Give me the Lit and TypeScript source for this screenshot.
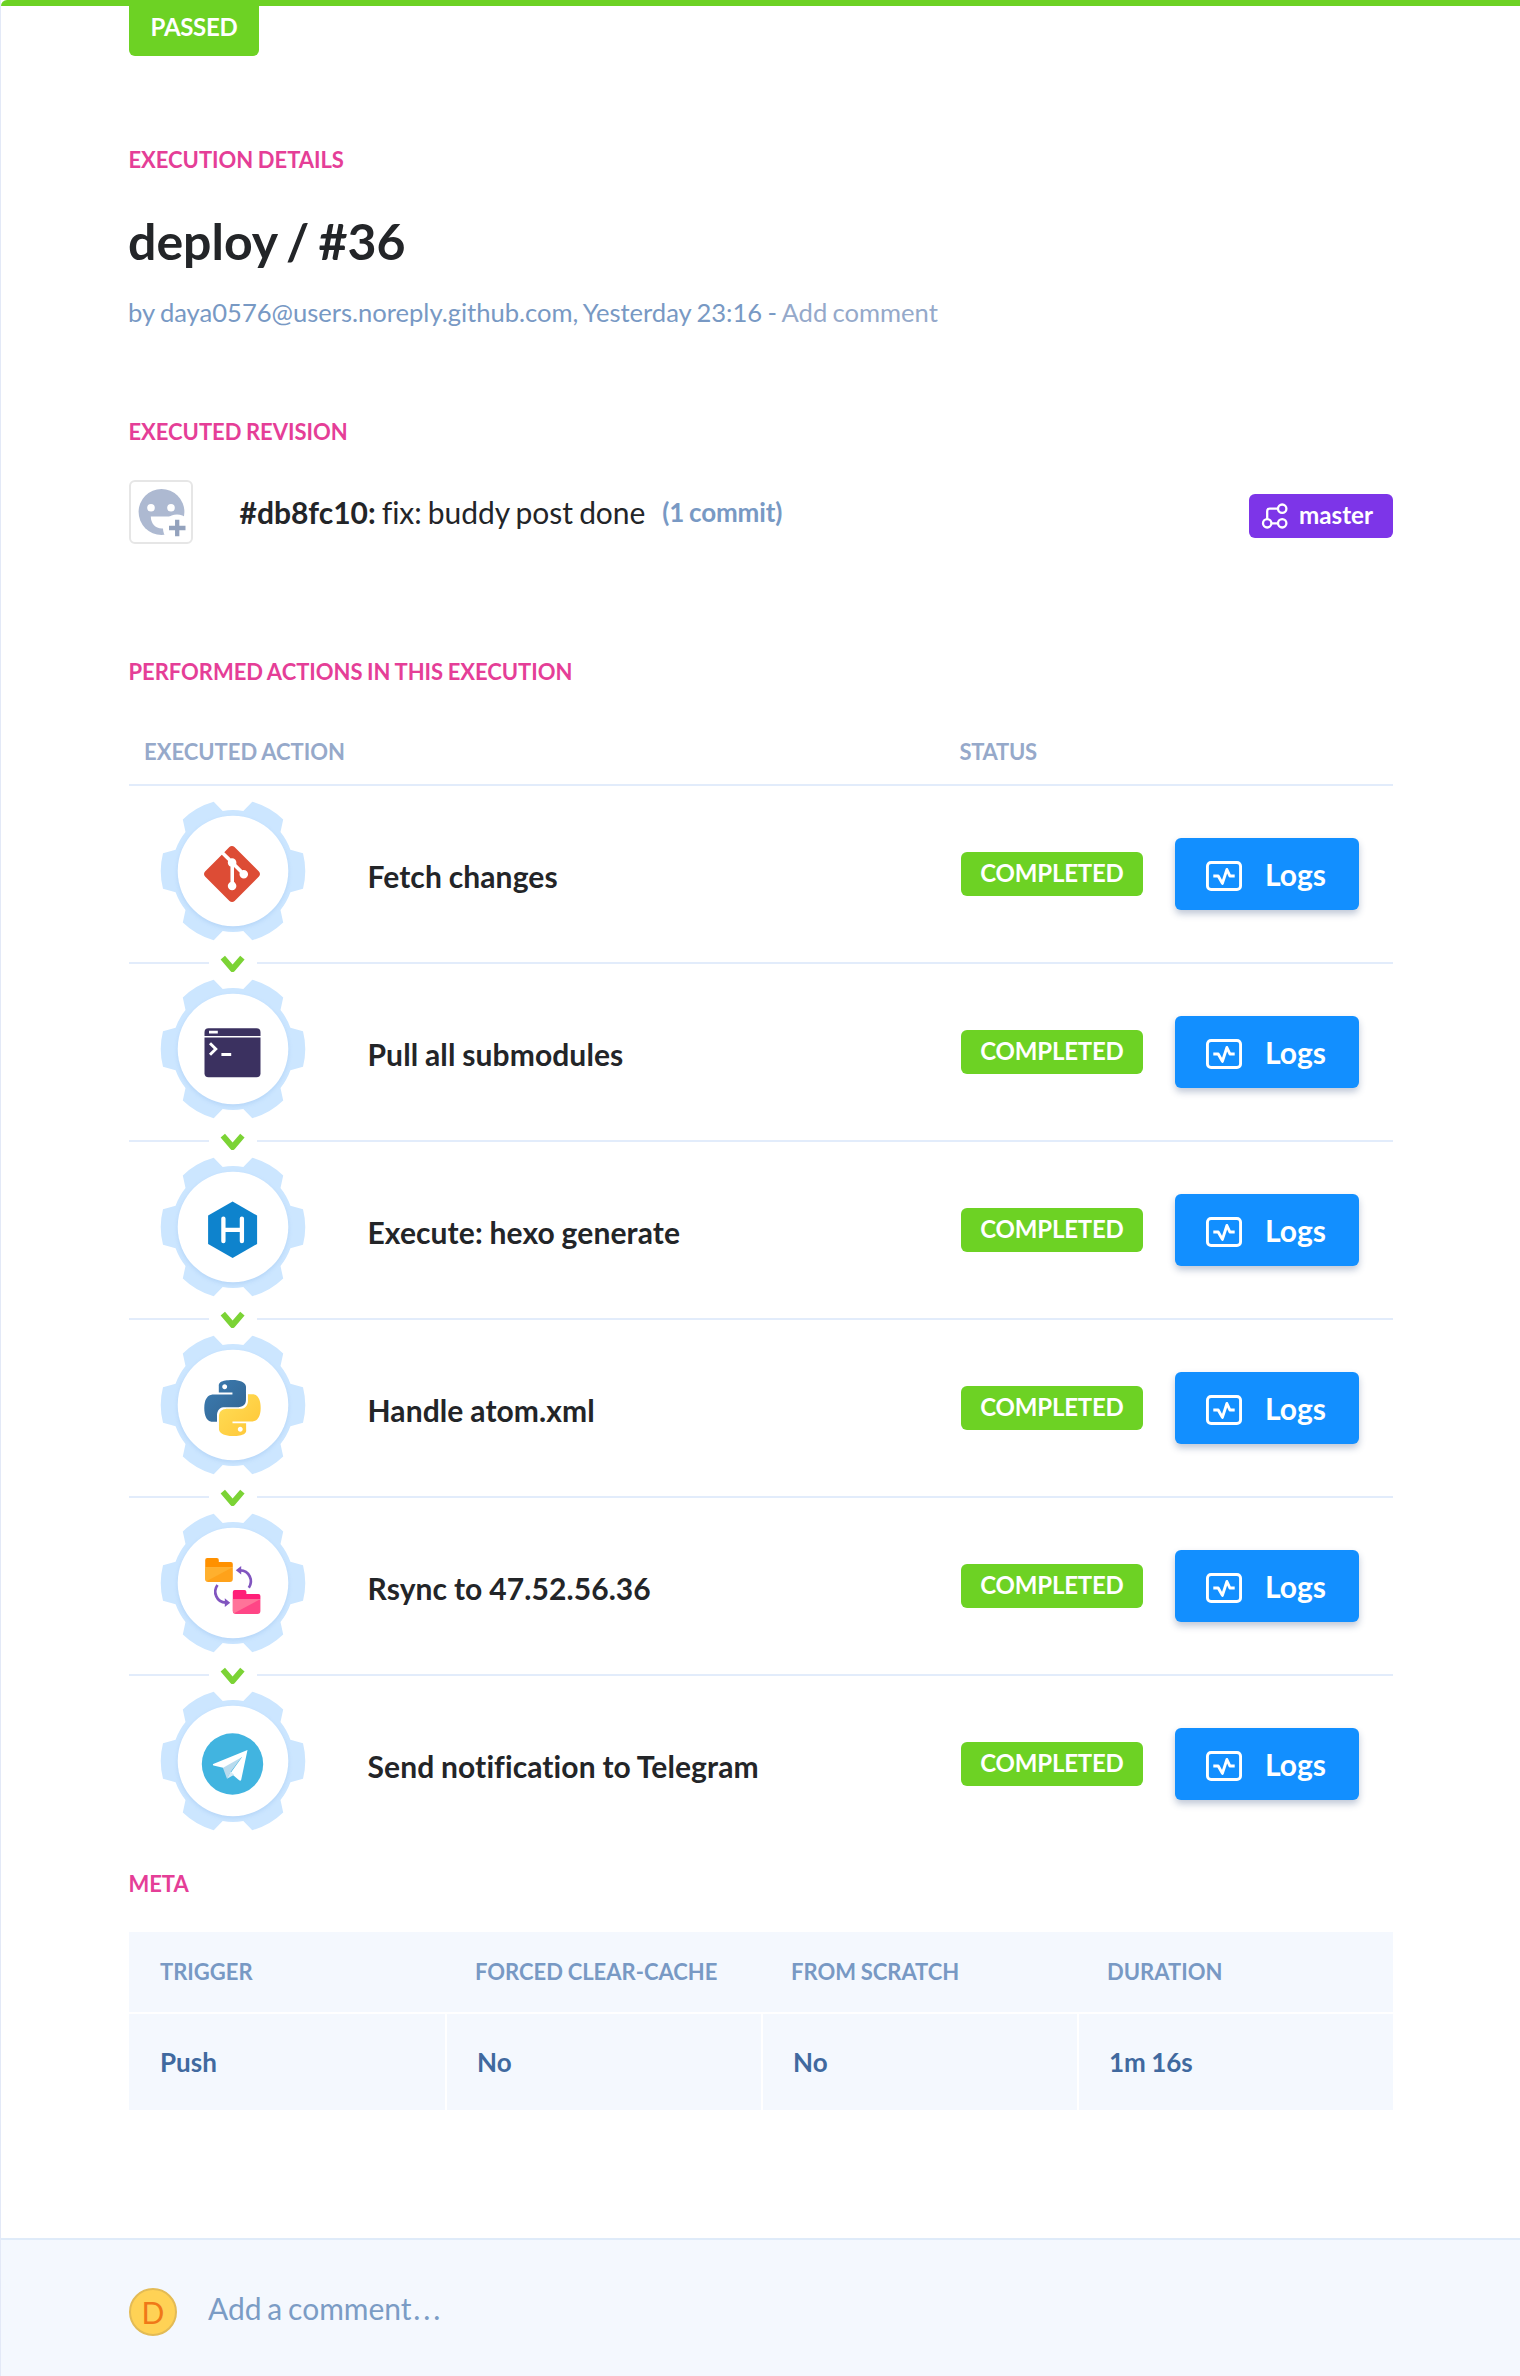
import { LitElement, html, css, svg, TemplateResult } from "lit";
import { customElement, property } from "lit/decorators.js";

type IconName = "git" | "terminal" | "hexo" | "python" | "rsync" | "telegram";

/* Every action icon is drawn in a 64x64 box centred on 32,32. */
const ICONS: Record<IconName, TemplateResult> = {
  git: svg`<path transform="translate(3.8 4) scale(2.333)" fill="#dd4c35" d="M23.546 10.93L13.067.452c-.604-.603-1.582-.603-2.188 0L8.708 2.627l2.76 2.76c.645-.215 1.379-.07 1.889.441.516.515.658 1.258.438 1.9l2.658 2.66c.645-.223 1.387-.078 1.9.435.721.72.721 1.884 0 2.604-.719.719-1.881.719-2.6 0-.539-.541-.674-1.337-.404-1.996L12.86 8.955v6.525c.176.086.342.203.488.348.713.721.713 1.883 0 2.6-.719.721-1.889.721-2.609 0-.719-.719-.719-1.879 0-2.598.182-.18.387-.316.605-.406V8.835c-.217-.091-.424-.222-.6-.401-.545-.545-.676-1.342-.396-2.009L7.636 3.7.45 10.881c-.6.605-.6 1.584 0 2.189l10.48 10.477c.604.604 1.582.604 2.186 0l10.43-10.43c.605-.603.605-1.582 0-2.187"/>`,
  terminal: svg`<g transform="translate(4 7.8)">
    <path fill="#3b3160" d="M.3 8.2V4.5a4 4 0 0 1 4-4h48a4 4 0 0 1 4 4v3.7z"/>
    <path fill="#3b3160" d="M.3 9.7h56v35.8a4 4 0 0 1-4 4h-48a4 4 0 0 1-4-4z"/>
    <path fill="#fff" d="M4.8 2.9h8.8v2.8H4.8zM17.2 25.2h9.8v2.9h-9.8z"/>
    <path fill="none" stroke="#fff" stroke-width="2.9" d="M5.8 15.4l5.8 5.8-5.8 5.8"/>
  </g>`,
  hexo: svg`<path fill="#0e83cd" d="M32.4 3.4l24.5 14.2v28.3L32.4 60.1 7.9 45.9V17.6z"/>
    <path fill="none" stroke="#fff" stroke-width="4.3" stroke-linecap="round" d="M23.2 20.6v22.6M41.7 20.6v22.6M23.2 31.9h18.5"/>`,
  python: svg`<defs>
      <linearGradient id="blue" x1="0" y1="0" x2="1" y2="1"><stop offset="0" stop-color="#3c7db3"/><stop offset="1" stop-color="#32638f"/></linearGradient>
      <linearGradient id="gold" x1="0" y1="0" x2="1" y2="1"><stop offset="0" stop-color="#ffdf58"/><stop offset="1" stop-color="#ffc536"/></linearGradient>
    </defs>
    <g transform="translate(4.2 4) scale(2.333)">
      <path fill="url(#blue)" d="M14.25.18l.9.2.73.26.59.3.45.32.34.34.25.34.16.33.1.3.04.26.02.2-.01.13V8.5l-.05.63-.13.55-.21.46-.26.38-.3.31-.33.25-.35.19-.35.14-.33.1-.3.07-.26.04-.21.02H8.77l-.69.05-.59.14-.5.22-.41.27-.33.32-.27.35-.2.36-.15.37-.1.35-.07.32-.04.27-.02.21v3.06H3.17l-.21-.03-.28-.07-.32-.12-.35-.18-.36-.26-.36-.36-.35-.46-.32-.59-.28-.73-.21-.88-.14-1.05-.05-1.23.06-1.22.16-1.04.24-.87.32-.71.36-.57.4-.44.42-.33.42-.24.4-.16.36-.1.32-.05.24-.01h.16l.06.01h8.16v-.83H6.18l-.01-2.75-.02-.37.05-.34.11-.31.17-.28.25-.26.31-.23.38-.2.44-.18.51-.15.58-.12.64-.1.71-.06.77-.04.84-.02 1.27.05zm-6.3 1.98l-.23.33-.08.41.08.41.23.34.33.22.41.09.41-.09.33-.22.23-.34.08-.41-.08-.41-.23-.33-.33-.22-.41-.09-.41.09z"/>
      <path fill="url(#gold)" d="M21.1 6.11l.28.06.32.12.35.18.36.27.36.35.35.47.32.59.28.73.21.88.14 1.04.05 1.23-.06 1.23-.16 1.04-.24.86-.32.71-.36.57-.4.45-.42.33-.42.24-.4.16-.36.09-.32.05-.24.02-.16-.01h-8.22v.82h5.84l.01 2.76.02.36-.05.34-.11.31-.17.29-.25.25-.31.24-.38.2-.44.17-.51.15-.58.13-.64.09-.71.07-.77.04-.84.01-1.27-.04-1.07-.14-.9-.2-.73-.25-.59-.3-.45-.33-.34-.34-.25-.34-.16-.33-.1-.3-.04-.25-.02-.2.01-.13v-5.34l.05-.64.13-.54.21-.46.26-.38.3-.32.33-.24.35-.2.35-.14.33-.1.3-.06.26-.04.21-.02.13-.01h5.84l.69-.05.59-.14.5-.21.41-.28.33-.32.27-.35.2-.36.15-.36.1-.35.07-.32.04-.28.02-.21V6.07h2.09l.14.01zm-6.47 14.25l-.23.33-.08.41.08.41.23.33.33.23.41.08.41-.08.33-.23.23-.33.08-.41-.08-.41-.23-.33-.33-.23-.41-.08-.41.08z"/>
    </g>`,
  rsync: svg`<g transform="translate(4 4)">
    <path fill="#ff9100" d="M1 9.2V2a2 2 0 0 1 2-2h9.6a2 2 0 0 1 2 2v2h12a2 2 0 0 1 2 2v3.2z"/>
    <path fill="#ffa21a" d="M1 9.2h27.6V21a3 3 0 0 1-3 3H4a3 3 0 0 1-3-3z"/>
    <path fill="#ffb02e" d="M1 9.2h27.4L2.2 23.2A3 3 0 0 1 1 21z"/>
    <path fill="#ff1f78" d="M28.6 41.2V34a2 2 0 0 1 2-2h9.6a2 2 0 0 1 2 2v2h12a2 2 0 0 1 2 2v3.2z"/>
    <path fill="#ff4686" d="M28.6 41.2h27.6V53a3 3 0 0 1-3 3H31.6a3 3 0 0 1-3-3z"/>
    <path fill="#ff7399" d="M28.6 41.2H56L29.8 55.2a3 3 0 0 1-1.2-2.2z"/>
    <g fill="none" stroke="#8155bf" stroke-width="2.7">
      <path d="M44.6 29.8C49.5 22.5 45 12.4 36 12.3"/>
      <path d="M13.3 27C8.2 34 12.5 44.5 21.6 44.6"/>
    </g>
    <path fill="#8155bf" d="M31.6 12.3l5.4-4.4v8.7zM26 44.7l-5.4-4.4V49z"/>
  </g>`,
  telegram: svg`<circle cx="32.3" cy="32" r="30.7" fill="#41b4e0"/>
    <path fill="#b9dbee" d="M22.5 35.2l4.3 11.6L30 40.5l12.6-17z"/>
    <path fill="#fff" d="M13 32l34.3-14L41 47.8a1.3 1.3 0 0 1-2 .5l-8.6-7.2 11.5-16-19 10.6-9.6-2.3a.8.8 0 0 1-.3-1.4z"/>
    <path fill="#d6eaf5" d="M26.8 46.8l3.5-7 3.7 3z"/>`,
};

@customElement("gear-icon")
export class GearIcon extends LitElement {
  @property() name: IconName = "git";

  static styles = css`
    :host { display: block; width: 144px; height: 144px; }
    svg { display: block; overflow: visible; }
    .body { fill: #cce6ff; }
    .disc { fill: #fff; filter: drop-shadow(0 2px 2px rgba(90, 150, 220, 0.2)); }
  `;

  render() {
    return html`<svg width="144" height="144" viewBox="-72 -72 144 144">
      <path class="body" d="M-10.3-60A61 61 0 0 1 10.3-60L19.3-69.2A72 72 0 0 1 50.2-51.5L47.5-39A61 61 0 0 1 57.4-21.3L70-17.8A72 72 0 0 1 70 17.8L57.4 21.3A61 61 0 0 1 47.5 39L50.2 51.5A72 72 0 0 1 19.3 69.2L10.3 60A61 61 0 0 1-10.3 60L-19.3 69.2A72 72 0 0 1-50.2 51.5L-47.5 39A61 61 0 0 1-57.4 21.3L-70 17.8A72 72 0 0 1-70-17.8L-57.4-21.3A61 61 0 0 1-47.5-39L-50.2-51.5A72 72 0 0 1-19.3-69.2z"/>
      <circle class="disc" r="55.3"/>
      <g transform="translate(-32.8 -29)">${ICONS[this.name]}</g>
    </svg>`;
  }
}

@customElement("action-row")
export class ActionRow extends LitElement {
  @property() icon: IconName = "git";
  @property() label = "";
  @property({ type: Boolean }) last = false;

  static styles = css`
    :host { display: block; }
    .row {
      position: relative; display: flex; align-items: center; height: 176px;
      border-bottom: 2px solid #e2ecfb;
    }
    .row.last { border-bottom: 0; }
    gear-icon { margin: 0 0 6px 32px; }
    .label {
      flex: 1; margin-left: 62.5px; padding-top: 4px; color: #232528;
      font-size: 30px; line-height: 36px; font-weight: 700;
      letter-spacing: 0.1px; word-spacing: -0.02em; font-variant-ligatures: none;
    }
    .status {
      box-sizing: border-box; width: 182px; height: 44px; padding-top: 6px;
      border-radius: 6px; background: #6dd224; color: #fff; text-align: center;
      font-size: 24px; line-height: 29px; font-weight: 700; letter-spacing: -0.2px;
    }
    .logs {
      display: flex; align-items: center; gap: 23px; box-sizing: border-box;
      width: 184px; height: 72px; margin: 0 34px 0 32px; padding: 0 0 0 31px;
      border: 0; border-radius: 6px; background: #128fff; color: #fff;
      box-shadow: 0 4px 7px rgba(60, 84, 130, 0.32);
      font: 700 30px/36px Lato, sans-serif;
    }
    .logs svg { flex: none; margin-top: 4px; }
    .next {
      position: absolute; left: 80px; bottom: -11px; width: 48px; height: 18px;
      background: #fff; display: flex; justify-content: center;
    }
  `;

  render() {
    return html`<div class="row ${this.last ? "last" : ""}">
      <gear-icon .name=${this.icon}></gear-icon>
      <div class="label">${this.label}</div>
      <div class="status">COMPLETED</div>
      <button class="logs">
        <svg width="36" height="30" viewBox="0 0 36 30" fill="none" stroke="#fff" stroke-width="2.9">
          <rect x="1.45" y="1.45" width="33.1" height="27.1" rx="3.6"/>
          <path d="M7.3 15h4.9l4.2 7.4L20.9 8.5l3 6.5h4.8" stroke-linejoin="round"/>
        </svg>
        Logs
      </button>
      ${this.last ? "" : html`<div class="next">
        <svg width="26" height="18" viewBox="0 0 26 18"><path fill="none" stroke="#7bd335" stroke-width="5.8" stroke-linejoin="round" d="M2.8 2.7L12.6 14 22.4 2.7"/></svg>
      </div>`}
    </div>`;
  }
}

@customElement("app-root")
export class AppRoot extends LitElement {
  private actions: { icon: IconName; label: string }[] = [
    { icon: "git", label: "Fetch changes" },
    { icon: "terminal", label: "Pull all submodules" },
    { icon: "hexo", label: "Execute: hexo generate" },
    { icon: "python", label: "Handle atom.xml" },
    { icon: "rsync", label: "Rsync to 47.52.56.36" },
    { icon: "telegram", label: "Send notification to Telegram" },
  ];

  private meta = [
    { name: "TRIGGER", value: "Push" },
    { name: "FORCED CLEAR-CACHE", value: "No" },
    { name: "FROM SCRATCH", value: "No" },
    { name: "DURATION", value: "1m 16s" },
  ];

  static styles = css`
    :host { display: block; font-family: Lato, sans-serif; color: #232528; font-variant-ligatures: none; }
    .page {
      box-sizing: border-box; display: flex; flex-direction: column;
      height: 2376px; background: #fff; border-left: 1px solid #e3e9f7;
    }
    .bar { height: 6px; background: #6dd224; border-top-left-radius: 6px; flex: none; }
    .content { padding: 0 127px 0 128px; }
    .passed {
      box-sizing: border-box; width: 130px; height: 50px; padding-top: 6px;
      background: #6dd224; border-radius: 0 0 6px 6px; color: #fff; text-align: center;
      font-size: 24px; line-height: 29px; font-weight: 700; letter-spacing: -0.3px;
    }
    h2 {
      margin: 0 0 0 -0.5px; color: #e53e97; font-size: 22px; line-height: 27px;
      font-weight: 700; letter-spacing: -0.04px; word-spacing: -0.03em;
    }
    .details { margin-top: 90px; }
    h1 { margin: 38px 0 0 -1px; font-size: 50px; line-height: 60px; font-weight: 700; word-spacing: -0.06em; }
    .by {
      margin: 26px 0 0 -1px; color: #7899c4; font-size: 25.6px; line-height: 30px;
      white-space: nowrap; letter-spacing: -0.02px; word-spacing: -0.045em;
    }
    .by span { color: #95a9ca; }
    .revision-title { margin-top: 91px; }
    .revision { display: flex; align-items: center; height: 64px; margin-top: 35px; }
    .face {
      box-sizing: border-box; width: 64px; height: 64px; border: 2px solid #e6e6e6;
      border-radius: 6px; margin-right: 46.5px;
    }
    .face svg { display: block; }
    .hash { font-size: 30px; line-height: 36px; font-weight: 700; }
    .message { margin-left: 6px; font-size: 30px; line-height: 36px; letter-spacing: -0.07px; word-spacing: -0.045em; }
    .commits {
      flex: 1; margin-left: 17px; color: #7899c4; font-size: 26px; line-height: 32px;
      font-weight: 700; letter-spacing: -0.15px; word-spacing: -0.05em;
    }
    .branch {
      display: flex; align-items: flex-start; gap: 10px; box-sizing: border-box;
      width: 144px; height: 44px; margin-top: 8px; padding: 6px 0 0 12px;
      background: #7d35e8; border-radius: 6px; color: #fff;
      font-size: 24.2px; line-height: 29px; font-weight: 700;
    }
    .branch svg { margin-top: 2px; }
    .performed { margin-top: 114px; }
    .head {
      display: flex; margin-top: 53px; padding: 0 0 19px 15px; border-bottom: 2px solid #e2ecfb;
      color: #96a9ca; font-size: 22px; line-height: 27px; font-weight: 700; word-spacing: -0.03em;
    }
    .head div:first-child { width: 815.5px; }
    .head div:last-child { letter-spacing: -0.3px; }
    .meta-title { margin-top: 18px; }
    .meta { margin-top: 35px; }
    .names, .values { display: grid; grid-template-columns: repeat(4, 316px); }
    .names div {
      height: 80px; padding-left: 30px; background: #f4f8fe; color: #7899c4;
      font-size: 22px; line-height: 80px; font-weight: 700; word-spacing: -0.03em;
    }
    .values { margin-top: 2px; }
    .values div {
      height: 96px; padding-left: 30px; background: #f4f8fe; color: #40699f;
      border-left: 2px solid #fff; font-size: 26px; line-height: 96px; font-weight: 700;
      word-spacing: -0.04em;
    }
    .values div:first-child { border-left: 0; }
    .names div:first-child, .values div:first-child { padding-left: 31px; }
    .comment {
      flex: 1; box-sizing: border-box; display: flex; align-items: flex-start; margin-top: 128px;
      padding: 48px 127px 0 128px; background: #f4f8fe; border-top: 2px solid #dfebf9;
    }
    .user {
      box-sizing: border-box; width: 48px; height: 48px; border: 2px solid #e3bb55; border-radius: 50%;
      background: #ffd255; color: #f07818; text-align: center; font-size: 30px; line-height: 44px;
    }
    .hint { margin: 2px 0 0 31px; color: #7b9cc5; font-size: 30px; line-height: 36px; word-spacing: -0.063em; }
    .dots { margin-left: 1.5px; letter-spacing: 3px; }
  `;

  render() {
    return html`<div class="page">
      <div class="bar"></div>
      <div class="content">
        <div class="passed">PASSED</div>
        <h2 class="details">EXECUTION DETAILS</h2>
        <h1>deploy / #36</h1>
        <div class="by">by daya0576@users.noreply.github.com, Yesterday 23:16 - <span>Add comment</span></div>

        <h2 class="revision-title">EXECUTED REVISION</h2>
        <div class="revision">
          <div class="face">
            <svg width="60" height="60" viewBox="2 2 60 60">
              <circle cx="32.5" cy="32" r="22.9" fill="#adb9d1"/>
              <circle cx="22" cy="27.7" r="3.8" fill="#fff"/>
              <circle cx="42" cy="27.7" r="3.8" fill="#fff"/>
              <path fill="#fff" d="M21.8 36.5H43v12H33C26 48.5 21.8 43 21.8 36.5z"/>
              <circle cx="48" cy="48.5" r="14" fill="#fff"/>
              <path stroke="#93a2bd" stroke-width="4.3" d="M40 48h16.5M48.2 39.8v16.4"/>
            </svg>
          </div>
          <span class="hash">#db8fc10:</span>
          <span class="message">fix: buddy post done</span>
          <span class="commits">(1 commit)</span>
          <div class="branch">
            <svg width="28" height="28" viewBox="0 0 28 28" fill="none" stroke="#fff" stroke-width="2.3">
              <circle cx="21.2" cy="6.7" r="4.2"/>
              <circle cx="6.2" cy="21.3" r="4.2"/>
              <circle cx="21.2" cy="21.3" r="4.2"/>
              <path d="M6.2 17V9.2a2.5 2.5 0 0 1 2.5-2.5H17M10.4 21.3H17"/>
            </svg>
            master
          </div>
        </div>

        <h2 class="performed">PERFORMED ACTIONS IN THIS EXECUTION</h2>
        <div class="head"><div>EXECUTED ACTION</div><div>STATUS</div></div>
        ${this.actions.map((a, i) => html`<action-row .icon=${a.icon} .label=${a.label} .last=${i === this.actions.length - 1}></action-row>`)}

        <h2 class="meta-title">META</h2>
        <div class="meta">
          <div class="names">${this.meta.map((m) => html`<div>${m.name}</div>`)}</div>
          <div class="values">${this.meta.map((m) => html`<div>${m.value}</div>`)}</div>
        </div>
      </div>
      <div class="comment">
        <div class="user">D</div>
        <div class="hint">Add a comment<span class="dots">...</span></div>
      </div>
    </div>`;
  }
}
